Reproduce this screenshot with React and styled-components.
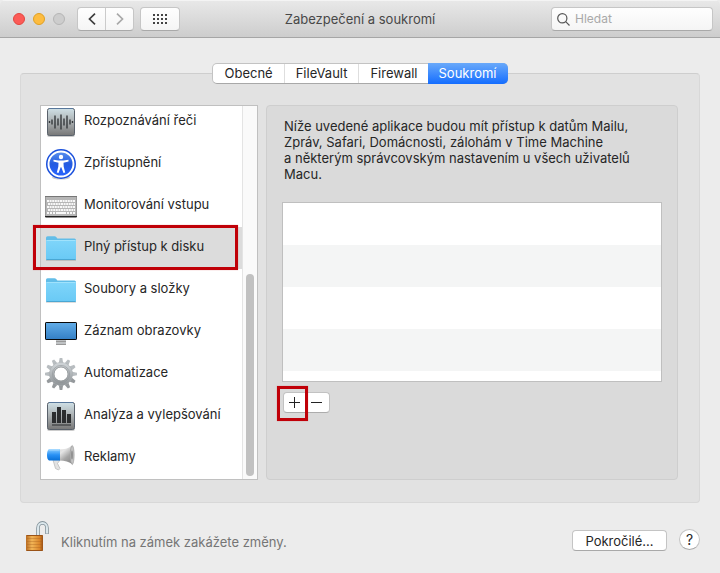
import React, { useState } from "react";
import styled, { createGlobalStyle, css } from "styled-components";

const Global = createGlobalStyle`
  *, *::before, *::after { box-sizing: border-box; }
  body {
    margin: 0;
    background: #ececec;
    color: #262626;
    font: 13px/16px Inter, "Liberation Sans", sans-serif;
  }
  button, input { font: inherit; color: inherit; margin: 0; }
  button { padding: 0; border: 0; background: none; }
`;

const Window = styled.div`
  display: flex;
  flex-direction: column;
  min-height: 100vh;
  background: #ececec;
  border-radius: 5px;
  overflow: hidden;
`;

const Toolbar = styled.header`
  display: grid;
  grid-template-columns: 1fr auto 1fr;
  align-items: center;
  height: 38px;
  padding: 0 7px;
  background: linear-gradient(#e8e8e8, #cdcdcd);
  border-top: 1px solid #f4f4f4;
  border-bottom: 1px solid #a6a6a6;
`;

const ToolbarStart = styled.div`
  display: flex;
  align-items: center;
`;

const Lights = styled.div`
  display: flex;
  gap: 8px;
  margin: 0 12px 0 6px;
`;

const Light = styled.button`
  width: 12px;
  height: 12px;
  border-radius: 50%;
  background: ${(p) => p.$fill};
  border: 1px solid ${(p) => p.$edge};
`;

const raised = css`
  background: linear-gradient(#fefefe, #f5f5f5);
  border: 1px solid #c6c6c6;
  border-bottom-color: #a9a9a9;
  border-radius: 4px;
`;

const NavGroup = styled.div`
  ${raised}
  display: flex;
  height: 24px;
  margin-right: 6px;
`;

const NavButton = styled.button`
  display: grid;
  place-items: center;
  width: 27px;
  color: ${(p) => (p.disabled ? "#a9a9a9" : "#3f3f3f")};
  & + & { width: 28px; border-left: 1px solid #cbcbcb; }
`;

const GridButton = styled.button`
  ${raised}
  display: grid;
  place-items: center;
  width: 40px;
  height: 24px;
`;

const Title = styled.h1`
  margin: 0;
  font-size: 13px;
  font-weight: 400;
  color: #484848;
`;

const Search = styled.label`
  ${raised}
  display: flex;
  align-items: center;
  justify-self: end;
  gap: 5px;
  width: 162px;
  height: 24px;
  padding: 0 5px;
  input {
    flex: 1;
    min-width: 0;
    padding: 0;
    border: 0;
    outline: 0;
    background: none;
    font-size: 12px;
  }
  input::placeholder { color: #a9a9a9; opacity: 1; }
`;

const Main = styled.main`
  display: flex;
  flex-direction: column;
  padding: 25px 20px 0;
`;

const Tabs = styled.div`
  display: flex;
  align-self: center;
  z-index: 1;
  height: 21px;
  margin-bottom: -11px;
  border: 1px solid #c3c3c3;
  border-bottom-color: #a8a8a8;
  border-radius: 5px;
  background: #fff;
`;

const Tab = styled.button`
  padding: 0 11px 1px;
  & + & { border-left: 1px solid #dedede; }
  &&[aria-selected="true"] {
    margin: -1px;
    border: 0;
    color: #fff;
    background: linear-gradient(#69a9fa, #146dff);
    border-radius: 0 5px 5px 0;
  }
`;

const GroupBox = styled.section`
  display: grid;
  grid-template-columns: 218px minmax(0, 1fr);
  gap: 8px;
  padding: 31px 21px 22px 19px;
  background: #e2e2e2;
  border: 1px solid #d8d8d8;
  border-top-color: #cecece;
  border-radius: 4px;
`;

const Sidebar = styled.nav`
  display: flex;
  height: 375px;
  background: #fff;
  border: 1px solid #c0c0c0;
`;

const Categories = styled.ul`
  flex: 1;
  display: flex;
  flex-direction: column;
  justify-content: flex-end;
  min-width: 0;
  margin: 0;
  padding: 0;
  list-style: none;
  clip-path: inset(0 0 0 -20px);
`;

const Category = styled.li`
  position: relative;
  flex: none;
  height: 42px;
`;

const CategoryButton = styled.button`
  display: flex;
  align-items: center;
  gap: 7px;
  width: 100%;
  height: 42px;
  padding: 0 4px;
  text-align: left;
  white-space: nowrap;
  background: ${(p) => (p.$active ? "#dcdcdc" : "transparent")};
  span { margin-bottom: 4px; }
`;

const Highlight = styled.span`
  position: absolute;
  inset: ${(p) => p.$inset};
  border: 3px solid #c00008;
  box-shadow: 0 0 1px #c0000866;
  pointer-events: none;
`;

const ScrollTrack = styled.div`
  display: flex;
  justify-content: center;
  align-items: flex-end;
  width: 15px;
  padding-bottom: 3px;
  background: #fafafa;
  border-left: 1px solid #e4e4e4;
`;

const ScrollThumb = styled.div`
  width: 8px;
  height: 202px;
  border-radius: 4px;
  background: #c1c1c1;
`;

const Detail = styled.div`
  padding: 12px 15px 16px;
  background: #dadada;
  border: 1px solid #cecece;
  border-radius: 4px;
`;

const Description = styled.p`
  margin: 0 0 20px 2px;
  white-space: pre-line;
`;

const AppList = styled.ul`
  height: 180px;
  margin: 0 0 10px;
  padding: 0;
  list-style: none;
  overflow: hidden;
  background: #fff;
  border: 1px solid #bfbfbf;
`;

const AppRow = styled.li`
  height: 42px;
  &:nth-child(even) { background: #f4f5f5; }
`;

const EditGroup = styled.div`
  position: relative;
  display: inline-flex;
  height: 21px;
  margin-left: 1px;
  background: #fff;
  border: 1px solid #c2c2c2;
  border-bottom-color: #acacac;
  border-radius: 4px;
`;

const EditButton = styled.button`
  display: grid;
  place-items: center;
  width: 21px;
  & + & { width: 24px; padding-right: 2px; border-left: 1px solid #dedede; }
`;

const Footer = styled.footer`
  display: flex;
  align-items: center;
  padding: 17px 20px 20px 25px;
`;

const LockButton = styled.button`
  display: grid;
  margin-right: 12px;
`;

const LockText = styled.span`
  flex: 1;
  padding-top: 11px;
  color: #757575;
`;

const PushButton = styled.button`
  height: 21px;
  min-width: 95px;
  margin: 9px 12px 0 0;
  background: #fff;
  border: 1px solid #c4c4c4;
  border-bottom-color: #a9a9a9;
  border-radius: 4px;
`;

const HelpButton = styled.button`
  width: 21px;
  height: 21px;
  margin-top: 7px;
  background: #fff;
  border: 1px solid #c4c4c4;
  border-bottom-color: #a9a9a9;
  border-radius: 50%;
  font-size: 14px;
`;

const IconSvg = styled.svg`
  flex: none;
`;

const Icon = ({ children }) => (
  <IconSvg width="32" height="32" viewBox="0 0 32 32" aria-hidden="true">{children}</IconSvg>
);

const Tile = ({ id }) => (
  <>
    <defs>
      <linearGradient id={id} x2="0" y2="1">
        <stop stopColor="#cfe0e6" /><stop offset=".45" stopColor="#aeb4b6" /><stop offset="1" stopColor="#777" />
      </linearGradient>
    </defs>
    <rect x="2" y="3" width="28" height="28" rx="2" fill="#0003" />
    <rect x="2.5" y="2.5" width="27" height="27" rx="2" fill={`url(#${id})`} stroke="#59616b" />
    <path d="M4 2.5h24" stroke="#58779b" />
  </>
);

const SpeechIcon = () => (
  <Icon>
    <Tile id="speech" />
    <path d="M4.500 15v2M7 13.500v5M10 9.500v13M13 12.500v7M16 8.500v15M19 12.500v7M22 9.500v13M25 13.500v5M27.500 15v2" stroke="#34383b" strokeWidth="1.400" />
  </Icon>
);

const AccessIcon = () => (
  <Icon>
    <defs>
      <linearGradient id="access" x2="0" y2="1"><stop stopColor="#5a91ee" /><stop offset=".5" stopColor="#245be0" /><stop offset="1" stopColor="#2864ff" /></linearGradient>
    </defs>
    <ellipse cx="16" cy="29.500" rx="9" ry="2" fill="#0003" />
    <circle cx="16" cy="16" r="15" fill="#1a50dc" />
    <circle cx="16" cy="16" r="12.500" fill="url(#access)" stroke="#fff" strokeWidth="2" />
    <circle cx="16" cy="9" r="2.200" fill="#fff" />
    <path d="M8.500 11.800l5 .7h5l5-.7v1.700l-5 1.200.2 4 1.500 5.800-1.700.6-2.200-5.800h-.6l-2.200 5.800-1.700-.6 1.500-5.800.2-4-5-1.200z" fill="#fff" />
  </Icon>
);

const KeyboardIcon = () => (
  <Icon>
    <rect x="0" y="7" width="32" height="20.500" rx="1" fill="#222" />
    <rect x="0" y="6" width="32" height="20" rx="1" fill="#b6b6b6" />
    <path d="M0 6.500h32" stroke="#777" />
    {[0, 1, 2, 3, 4].map((r) => (
      <path key={r} d={`M${2 + (r % 2)} ${11 + r * 3}h${28 - (r % 2)}`} stroke="#f8f8f8" strokeWidth="2" strokeDasharray={r === 4 ? "2 1 2 1 2 1 10 1" : "2 .6"} />
    ))}
    <path d="M.5 7v19M31.500 7v19" stroke="#999" />
  </Icon>
);

const FolderIcon = ({ id }) => (
  <Icon>
    <defs><linearGradient id={id} x2="0" y2="1"><stop stopColor="#7fd5fa" /><stop offset="1" stopColor="#69c9f5" /></linearGradient></defs>
    <path d="M1 27h30v2H1z" fill="#0002" />
    <path d="M1 5.700Q1 4.200 2.500 4.200h7q1 0 1.700.8l1.200 1.400h17q1.600 0 1.600 1.600V14H1z" fill="#62bde8" />
    <path d="M1 9q0-1 1-1h28q1 0 1 1v18q0 1-1 1H2q-1 0-1-1z" fill={`url(#${id})`} />
    <path d="M1.500 8.500h29" stroke="#a0e2fc" />
    <path d="M1.500 27.500h29" stroke="#4aa7d3" />
  </Icon>
);

const DisplayIcon = () => (
  <Icon>
    <defs><linearGradient id="display" x2="0" y2="1"><stop stopColor="#62ade8" /><stop offset="1" stopColor="#337fc5" /></linearGradient></defs>
    <path d="M11 24h10v4H11z" fill="#bfc2c4" />
    <path d="M11 25.500h10M11 28.500h10" stroke="#999" />
    <rect x=".5" y="6.500" width="31" height="17" rx=".6" fill="url(#display)" stroke="#080808" />
  </Icon>
);

const GearIcon = () => (
  <Icon>
    <defs><linearGradient id="gear" x2="0" y2="1"><stop stopColor="#ccd1d4" /><stop offset="1" stopColor="#94999c" /></linearGradient></defs>
    <g transform="translate(16 16)">
      {Array.from({ length: 12 }, (_, i) => (
        <path key={i} transform={`rotate(${i * 30})`} d="M-2.200-11L-1.300-16h2.600l.9 5z" fill={i > 3 && i < 9 ? "#95999c" : "#b8bdc0"} />
      ))}
      <circle r="9.300" fill="none" stroke="#a9aeb1" strokeWidth="5" />
      <circle r="9.300" fill="none" stroke="url(#gear)" strokeWidth="4.200" />
      <circle r="8.600" fill="none" stroke="#8a8f92" strokeWidth=".5" />
      <circle r="7" fill="none" stroke="#85898c" strokeWidth=".6" />
    </g>
  </Icon>
);

const ChartIcon = () => (
  <Icon>
    <Tile id="chart" />
    <path d="M7 12h4v11H7zM12 7h4v16h-4zM17 10h4v13h-4zM22 14h4v9h-4zM7 24.500h19v1H7z" fill="#2b2d2f" />
  </Icon>
);

const MegaphoneIcon = () => (
  <Icon>
    <defs>
      <linearGradient id="mega" x2="0" y2="1"><stop stopColor="#86cbff" /><stop offset=".5" stopColor="#2991f5" /><stop offset="1" stopColor="#0970d7" /></linearGradient>
      <linearGradient id="horn" x2=".6" y2="1"><stop stopColor="#d5d5d5" /><stop offset=".35" stopColor="#e4e4e4" /><stop offset=".7" stopColor="#a5a5a5" /><stop offset="1" stopColor="#8d8d8d" /></linearGradient>
    </defs>
    <path d="M8 18h7l-2.500 3.500 2.500 5-1.500 1.500-3-1.500z" fill="#e2e2e2" stroke="#b5b5b5" strokeWidth=".7" />
    <path d="M14 7.500c5 0 9-1 13-4l1 19c-4-2.500-8-4-14-4z" fill="url(#horn)" />
    <path d="M4 7.300h11v11.200H4Q2 17.500 2 13T4 7.300z" fill="url(#mega)" />
    <path d="M3.500 8h11" stroke="#a5d8ff" />
    <ellipse cx="27.200" cy="13" rx="1.900" ry="9.500" fill="#c3c3c3" stroke="#9d9d9d" strokeWidth=".7" />
    <ellipse cx="27" cy="13" rx=".8" ry="4.500" fill="#858585" />
  </Icon>
);

const LockIcon = () => (
  <svg width="24" height="32" viewBox="0 0 24 32" aria-hidden="true">
    <defs>
      <linearGradient id="brass"><stop stopColor="#b86b22" /><stop offset=".35" stopColor="#f2b557" /><stop offset=".8" stopColor="#da852a" /><stop offset="1" stopColor="#995016" /></linearGradient>
    </defs>
    <path d="M13 17V8C13 1.200 22 1.200 22 8V14" fill="none" stroke="#84939b" strokeWidth="3.600" />
    <path d="M13 17V8C13 1.200 22 1.200 22 8V13.500" fill="none" stroke="#dbe7ec" strokeWidth="2" />
    <rect x="1" y="15" width="17" height="16" rx="1" fill="url(#brass)" />
    <path d="M2 18.500h15M2 21.500h15M2 24.500h15M2 27.500h15" stroke="#a75f1e" strokeOpacity=".35" />
    <path d="M1.500 15.500h16M1.500 30.500h16" stroke="#9a5317" />
  </svg>
);

const CATEGORIES = [
  ["Rozpoznávání řeči", <SpeechIcon />],
  ["Zpřístupnění", <AccessIcon />],
  ["Monitorování vstupu", <KeyboardIcon />],
  ["Plný přístup k disku", <FolderIcon id="folderDisk" />],
  ["Soubory a složky", <FolderIcon id="folderFiles" />],
  ["Záznam obrazovky", <DisplayIcon />],
  ["Automatizace", <GearIcon />],
  ["Analýza a vylepšování", <ChartIcon />],
  ["Reklamy", <MegaphoneIcon />],
];

const TABS = ["Obecné", "FileVault", "Firewall", "Soukromí"];

export default function App() {
  const [tab, setTab] = useState("Soukromí");
  const [category, setCategory] = useState("Plný přístup k disku");

  return (
    <Window>
      <Global />
      <Toolbar>
        <ToolbarStart>
          <Lights>
            <Light aria-label="Zavřít" $fill="#fc5b57" $edge="#e2463f" />
            <Light aria-label="Minimalizovat" $fill="#fdbc40" $edge="#dfa023" />
            <Light aria-label="Zvětšit" disabled $fill="#cdcdcd" $edge="#b5b5b5" />
          </Lights>
          <NavGroup>
            <NavButton aria-label="Zpět">
              <svg width="8" height="12" viewBox="0 0 8 12"><path d="M7 .7L1.500 6 7 11.300" fill="none" stroke="currentColor" strokeWidth="1.700" /></svg>
            </NavButton>
            <NavButton aria-label="Vpřed" disabled>
              <svg width="8" height="12" viewBox="0 0 8 12"><path d="M1 .7L6.500 6 1 11.300" fill="none" stroke="currentColor" strokeWidth="1.700" /></svg>
            </NavButton>
          </NavGroup>
          <GridButton aria-label="Zobrazit vše">
            <svg width="14" height="10" viewBox="0 0 14 10"><path d="M0 1h14M0 5h14M0 9h14" stroke="#444" strokeWidth="2" strokeDasharray="2 2" /></svg>
          </GridButton>
        </ToolbarStart>
        <Title>Zabezpečení a soukromí</Title>
        <Search>
          <svg width="13" height="13" viewBox="0 0 13 13" fill="none" stroke="#555" strokeWidth="1.200" aria-hidden="true">
            <circle cx="5.300" cy="5.300" r="4.600" /><path d="M8.700 8.700l3.800 3.800" />
          </svg>
          <input type="search" placeholder="Hledat" aria-label="Hledat" />
        </Search>
      </Toolbar>

      <Main>
        <Tabs role="tablist">
          {TABS.map((name) => (
            <Tab key={name} role="tab" aria-selected={name === tab} onClick={() => setTab(name)}>{name}</Tab>
          ))}
        </Tabs>
        <GroupBox>
          <Sidebar>
            <Categories>
              {CATEGORIES.map(([name, icon]) => (
                <Category key={name}>
                  <CategoryButton $active={name === category} onClick={() => setCategory(name)}>
                    {icon}
                    <span>{name}</span>
                  </CategoryButton>
                  {name === category && <Highlight $inset="-2px 4px -1px -8px" />}
                </Category>
              ))}
            </Categories>
            <ScrollTrack><ScrollThumb /></ScrollTrack>
          </Sidebar>
          <Detail>
            <Description>
              {"Níže uvedené aplikace budou mít přístup k datům Mailu,\nZpráv, Safari, Domácnosti, zálohám v Time Machine\na některým správcovským nastavením u všech uživatelů\nMacu."}
            </Description>
            <AppList aria-label="Aplikace">
              <AppRow /><AppRow /><AppRow /><AppRow /><AppRow />
            </AppList>
            <EditGroup>
              <EditButton aria-label="Přidat">
                <svg width="11" height="11" viewBox="0 0 11 11"><path d="M0 5.500h11M5.500 0v11" stroke="#222" /></svg>
              </EditButton>
              <EditButton aria-label="Odebrat">
                <svg width="11" height="11" viewBox="0 0 11 11"><path d="M0 5.500h11" stroke="#222" /></svg>
              </EditButton>
              <Highlight $inset="-7px 21px -9px -7px" />
            </EditGroup>
          </Detail>
        </GroupBox>
      </Main>

      <Footer>
        <LockButton aria-label="Zámek"><LockIcon /></LockButton>
        <LockText>Kliknutím na zámek zakážete změny.</LockText>
        <PushButton>Pokročilé…</PushButton>
        <HelpButton aria-label="Nápověda">?</HelpButton>
      </Footer>
    </Window>
  );
}
